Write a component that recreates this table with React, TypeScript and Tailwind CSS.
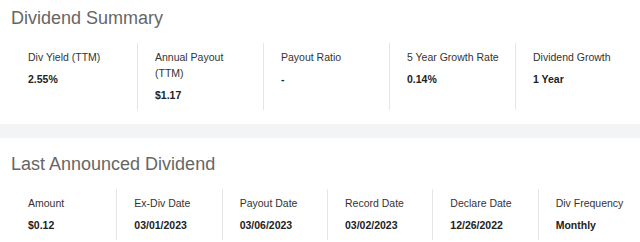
import React from "react";

type Stat = { label: string; value: string };

const summary: Stat[] = [
  { label: "Div Yield (TTM)", value: "2.55%" },
  { label: "Annual Payout (TTM)", value: "$1.17" },
  { label: "Payout Ratio", value: "-" },
  { label: "5 Year Growth Rate", value: "0.14%" },
  { label: "Dividend Growth", value: "1 Year" },
];

const lastDividend: Stat[] = [
  { label: "Amount", value: "$0.12" },
  { label: "Ex-Div Date", value: "03/01/2023" },
  { label: "Payout Date", value: "03/06/2023" },
  { label: "Record Date", value: "03/02/2023" },
  { label: "Declare Date", value: "12/26/2022" },
  { label: "Div Frequency", value: "Monthly" },
];

const StatCell = ({ stat, first }: { stat: Stat; first: boolean }) => {
  return (
    <div
      className={`flex flex-col pl-[17px] pr-3 pt-[6px] pb-[7px] ${
        first ? "" : "border-l border-[#e6e6e6]"
      }`}
    >
      <div className="text-[10.5px] leading-[16px] text-[#333333]">{stat.label}</div>
      <div className="mt-[6px] text-[10.5px] leading-[16px] font-bold text-[#222222]">{stat.value}</div>
    </div>
  );
};

const App = () => {
  return (
    <div className="w-[640px] h-[242px] overflow-hidden bg-white font-['Liberation_Sans',Arial,sans-serif]">
      <div className="pt-[6px] pb-[14px]">
        <h2 className="pl-[11px] text-[18px] leading-[24px] text-[#666666]">Dividend Summary</h2>
        <div className="mt-[13px] ml-[11px] w-[630px] grid grid-cols-5">
          {summary.map((s, i) => (
            <StatCell key={s.label} stat={s} first={i === 0} />
          ))}
        </div>
      </div>
      <div className="h-[14px] bg-[#f3f4f6]" />
      <div className="pt-[14px]">
        <h2 className="pl-[11px] text-[18px] leading-[24px] text-[#666666]">Last Announced Dividend</h2>
        <div className="mt-[13px] ml-[11px] w-[632px] grid grid-cols-6">
          {lastDividend.map((s, i) => (
            <StatCell key={s.label} stat={s} first={i === 0} />
          ))}
        </div>
      </div>
    </div>
  );
};

export default App;
